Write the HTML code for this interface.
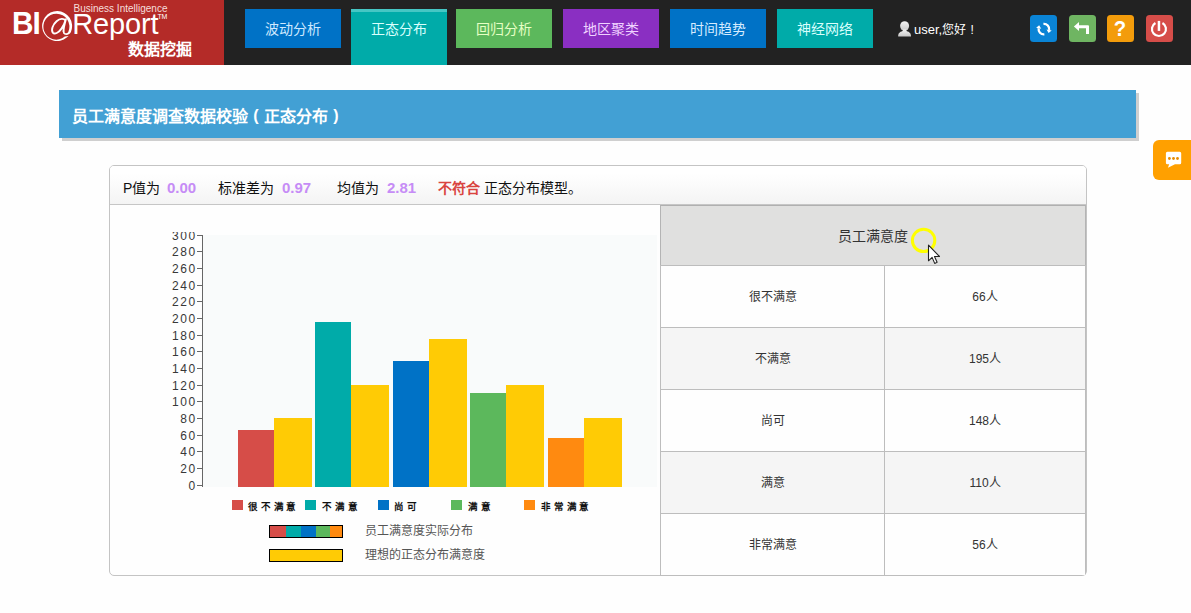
<!DOCTYPE html>
<html lang="zh-CN">
<head>
<meta charset="utf-8">
<title>BI@Report 数据挖掘</title>
<style>
*{box-sizing:border-box;margin:0;padding:0}
html,body{width:1191px;height:613px;overflow:hidden;background:#fefefe}
body{position:relative;font-family:"Liberation Sans",sans-serif;color:#222;font-size:14px}
.abs{position:absolute}
/* header */
#hdr{position:absolute;left:0;top:0;width:1191px;height:65px;background:#222222}
#logo{position:absolute;left:0;top:0;width:224px;height:65px;background:#b42b28;color:#fff;overflow:hidden}
#logo .bi{position:absolute;left:12px;top:4.500px;font-size:32px;line-height:36px;font-weight:bold;letter-spacing:-1px;transform:scaleX(.93);transform-origin:0 0}
#logo .rep{position:absolute;left:72.200px;top:8px;font-size:29px;line-height:33px;letter-spacing:-.15px}
#logo .tm{position:absolute;left:157.500px;top:12.800px;font-size:7px;line-height:8px;letter-spacing:-.3px}
#logo .sub{position:absolute;left:73.5px;top:2.800px;font-size:10px;line-height:12px;color:#f6dedc;white-space:nowrap}
#logo .cn{position:absolute;left:128px;top:38.500px;font-size:16px;line-height:22px;font-weight:bold;white-space:nowrap}
.tab{position:absolute;top:9px;width:96px;height:39px;line-height:41px;text-align:center;font-size:14px;white-space:nowrap}
.t1{left:245px;background:#0072c6;color:#cfe9ff}
.t2{left:351px;background:#00aba9;color:#d9fffd;height:56px;border-top:3px solid #45c6c4;line-height:35px}
.t3{left:456px;background:#5cb85c;color:#e6ffc4}
.t4{left:563px;background:#8a2fc2;color:#f0d2ff}
.t5{left:670px;background:#0072c6;color:#d6ecff}
.t6{left:777px;background:#00aba9;color:#d9fffd}
#user{position:absolute;left:914px;top:21px;font-size:13px;line-height:18px;color:#fff;white-space:nowrap}
.ib{position:absolute;top:15px;width:27px;height:27px;border-radius:3.500px}
/* title */
#title{position:absolute;left:59px;top:90px;width:1077px;height:48px;background:#42a0d4;box-shadow:3px 3px 0 #cfcfcf;color:#fff;font-size:16px;font-weight:bold;line-height:53px;padding-left:13px;white-space:nowrap}
#title i{display:inline-block;width:16px;text-align:center;font-style:normal;position:relative;top:-1px}
#chat{position:absolute;left:1153px;top:140px;width:40px;height:40px;background:#ffa000;border-radius:6px 0 0 6px}
/* panel */
#panel{position:absolute;left:109px;top:165px;width:978px;height:411px;border:1px solid #c4c4c4;border-radius:5px;background:#fefefe;overflow:hidden}
#phead{position:absolute;left:0;top:0;width:976px;height:39px;background:linear-gradient(#ffffff 20%,#f4f4f4);border-bottom:1px solid #c6c6c6;font-size:14px;line-height:20px;white-space:nowrap;color:#111}
#phead span{position:absolute;top:12px}
.pv{color:#c68cf6;font-weight:bold;font-size:15px}
.bad{color:#d9443f;font-weight:bold}
/* chart */
#plot{position:absolute;left:203px;top:235px;width:454px;height:252px;background:#f9fbfb}
.bar{position:absolute}
.yl{position:absolute;left:150.600px;width:46px;text-align:right;font-size:12px;line-height:12px;letter-spacing:1.500px;color:#383838;white-space:nowrap}
.tk{position:absolute;left:197px;width:6px;height:1px;background:#666}
.lg{position:absolute;top:500px;width:11px;height:10px}
.lt{position:absolute;top:499.500px;font-size:9.500px;line-height:14px;font-weight:bold;letter-spacing:2.800px;color:#111;white-space:nowrap}
.strip{position:absolute;left:269px;width:74px;height:13px;border:1px solid #000}
.st{position:absolute;left:365px;font-size:12px;line-height:16px;color:#555;white-space:nowrap}
/* table */
#tbl{position:absolute;left:660px;top:204px;width:427px;height:372px}
.cell{position:absolute;text-align:center;font-size:12px;color:#333;white-space:nowrap}
</style>
</head>
<body>
<div id="hdr">
  <div id="logo">
    <div class="sub">Business Intelligence</div>
    <div class="bi">BI</div>
    <svg class="abs" style="left:40px;top:9px" width="36" height="36" viewBox="0 0 36 36"><path fill="#fff" d="M28.600 27 L26.74 28.54 A15.0 15.0 0 1 1 31.01 22.67 C30.500 25 27.500 26.300 25 25.800 C23.300 25.400 22.600 24 22.900 22 L24.300 21.600 C24.200 23.300 25 24.300 26.400 24.200 C27.500 24.100 28 23.500 28.45 22.52 A13.0 13.0 0 1 0 24.76 27.61 Z"/><path fill="none" stroke="#fff" stroke-width="1.900" stroke-linecap="round" stroke-linejoin="round" d="M25.400 11.600 C24 9.300 20 9.200 16.600 12.200 C12.600 15.600 11 21.200 12.800 23.600 C14.600 25.800 18.600 23.800 21.500 19.600 C23.400 16.800 24.900 13.500 25.900 10.200 C24.800 14.200 23.600 18.200 23.500 22.200"/></svg>
    <div class="rep">Report</div>
    <div class="tm">TM</div>
    <div class="cn">数据挖掘</div>
  </div>
  <div class="tab t1">波动分析</div>
  <div class="tab t2">正态分布</div>
  <div class="tab t3">回归分析</div>
  <div class="tab t4">地区聚类</div>
  <div class="tab t5">时间趋势</div>
  <div class="tab t6">神经网络</div>
  <svg class="abs" style="left:898px;top:20.500px" width="14" height="16" viewBox="0 0 14 16"><defs><linearGradient id="ug" x1="0" y1="0" x2="0" y2="1"><stop offset="0" stop-color="#f4f4f4"/><stop offset="1" stop-color="#c8c8c8"/></linearGradient></defs><g fill="url(#ug)"><ellipse cx="6.600" cy="5" rx="4.500" ry="4.800"/><path d="M.2 15.500C.2 12.400 1.400 11.200 4.700 10.100L5 8.500H8.200L8.500 10.100C11.800 11.200 13 12.400 13 15.500Z"/></g></svg>
  <div id="user">user,<span style="font-size:12px">您好<span style="display:inline-block;width:12px;text-align:center">!</span></span></div>
  <div class="ib" style="left:1030px;background:#0a84d6">
    <svg width="27" height="27" viewBox="0 0 27 27"><g fill="none" stroke="#fff" stroke-width="2.3"><path d="M13.44 8.82A5.3 5.3 0 0 1 19.12 15.02"/><path d="M14.36 19.38A5.3 5.3 0 0 1 8.68 13.18"/></g><path fill="#fff" d="M18.62 17.88 L21.68 15.47 L16.56 14.57Z"/><path fill="#fff" d="M9.18 10.32 L6.12 12.73 L11.24 13.63Z"/></svg>
  </div>
  <div class="ib" style="left:1069px;background:#6fb562">
    <svg width="27" height="27" viewBox="0 0 27 27"><path fill="#fff" d="M4.900 11.500L10 7.100V10.200H19Q20 10.200 20 11.200V18.900H17V13.200H10V15.900Z"/></svg>
  </div>
  <div class="ib" style="left:1107px;background:#f39c0b;color:#fff;font-weight:bold;font-size:22.500px;line-height:27px;text-align:center"><span style="display:inline-block;transform:scaleX(.9);position:relative;left:-.6px">?</span></div>
  <div class="ib" style="left:1146px;background:#d64d49">
    <svg width="27" height="27" viewBox="0 0 27 27"><g fill="none" stroke="#fff"><path d="M9.450 7.940A7 7 0 1 0 16.450 7.940" stroke-width="2.200"/><path d="M12.950 5.900V15.900" stroke-width="2.500"/></g></svg>
  </div>
</div>

<div id="title">员工满意度调查数据校验<i>(</i>正态分布<i>)</i></div>
<div id="chat"><svg class="abs" style="left:12px;top:11px" width="18" height="18" viewBox="0 0 18 18"><path fill="#fff" d="M2.400 .8H14.700Q16.200 .8 16.200 2.300V11.700Q16.200 13.200 14.700 13.200H10L2.900 16.800L4.200 13.200H2.400Q.9 13.200 .9 11.700V2.300Q.9 .8 2.400 .8Z"/><g fill="#e88d00"><circle cx="4.400" cy="7.500" r="1.400"/><circle cx="8.500" cy="7.500" r="1.400"/><circle cx="12.500" cy="7.500" r="1.400"/></g></svg></div>

<div id="panel">
  <div id="phead">
    <span style="left:13px">P值为</span><span class="pv" style="left:57px">0.00</span>
    <span style="left:108px">标准差为</span><span class="pv" style="left:172px">0.97</span>
    <span style="left:227px">均值为</span><span class="pv" style="left:277px">2.81</span>
    <span class="bad" style="left:328px">不符合</span><span style="left:374px">正态分布模型。</span>
  </div>
</div>

<!-- chart (page coordinates) -->
<div class="abs" id="chart" style="left:110px;top:232px;width:550px;height:343px;overflow:hidden"></div>
<div id="plot"></div>
<div class="abs" style="left:202px;top:235px;width:1px;height:252px;background:#666"></div>
<div id="ticks">
<div class="tk" style="top:485px"></div><div class="yl" style="top:480px">0</div>
<div class="tk" style="top:468px"></div><div class="yl" style="top:463px">20</div>
<div class="tk" style="top:451px"></div><div class="yl" style="top:446px">40</div>
<div class="tk" style="top:435px"></div><div class="yl" style="top:430px">60</div>
<div class="tk" style="top:418px"></div><div class="yl" style="top:413px">80</div>
<div class="tk" style="top:401px"></div><div class="yl" style="top:396px">100</div>
<div class="tk" style="top:385px"></div><div class="yl" style="top:380px">120</div>
<div class="tk" style="top:368px"></div><div class="yl" style="top:363px">140</div>
<div class="tk" style="top:351px"></div><div class="yl" style="top:346px">160</div>
<div class="tk" style="top:335px"></div><div class="yl" style="top:330px">180</div>
<div class="tk" style="top:318px"></div><div class="yl" style="top:313px">200</div>
<div class="tk" style="top:301px"></div><div class="yl" style="top:296px">220</div>
<div class="tk" style="top:285px"></div><div class="yl" style="top:280px">240</div>
<div class="tk" style="top:268px"></div><div class="yl" style="top:263px">260</div>
<div class="tk" style="top:251px"></div><div class="yl" style="top:246px">280</div>
<div class="tk" style="top:235px"></div><div class="yl" style="top:230px">300</div>
<div class="abs" style="left:150px;top:222px;width:47px;height:10px;background:#fefefe"></div>
</div>

<div class="bar" style="left:238px;top:430px;width:36px;height:57px;background:#d64d48"></div>
<div class="bar" style="left:274px;top:418px;width:38px;height:69px;background:#ffcb05"></div>
<div class="bar" style="left:315px;top:322px;width:36px;height:165px;background:#00aba9"></div>
<div class="bar" style="left:351px;top:385px;width:38px;height:102px;background:#ffcb05"></div>
<div class="bar" style="left:393px;top:361px;width:36px;height:126px;background:#0072c6"></div>
<div class="bar" style="left:429px;top:339px;width:38px;height:148px;background:#ffcb05"></div>
<div class="bar" style="left:470px;top:393px;width:36px;height:94px;background:#5cb85c"></div>
<div class="bar" style="left:506px;top:385px;width:38px;height:102px;background:#ffcb05"></div>
<div class="bar" style="left:548px;top:438px;width:36px;height:49px;background:#ff8a10"></div>
<div class="bar" style="left:584px;top:418px;width:38px;height:69px;background:#ffcb05"></div>

<div class="lg" style="left:232px;background:#d64d48"></div><div class="lt" style="left:248px">很不满意</div>
<div class="lg" style="left:305px;background:#00aba9"></div><div class="lt" style="left:322px">不满意</div>
<div class="lg" style="left:378px;background:#0072c6"></div><div class="lt" style="left:394px">尚可</div>
<div class="lg" style="left:451px;background:#5cb85c"></div><div class="lt" style="left:468px">满意</div>
<div class="lg" style="left:524px;background:#ff8a10"></div><div class="lt" style="left:541px">非常满意</div>

<div class="strip" style="top:525px;background:linear-gradient(90deg,#d64d48 0 16px,#00aba9 16px 31px,#0072c6 31px 46px,#5cb85c 46px 60px,#ff8a10 60px)"></div>
<div class="st" style="top:523px">员工满意度实际分布</div>
<div class="strip" style="top:549px;background:#ffcb05"></div>
<div class="st" style="top:547px">理想的正态分布满意度</div>

<div class="abs" style="left:109px;top:165px;width:978px;height:411px;overflow:hidden;border-radius:5px"><div class="abs" style="left:-109px;top:-165px;width:1191px;height:613px">
<!-- table -->
<div class="abs" style="left:660px;top:205px;width:426px;height:61px;background:#e0e0df;border:1px solid #b4b4b4;border-top:1px solid #b0b0b0"></div>
<div class="cell" style="left:661px;top:226px;width:424px;font-size:14px;line-height:20px;color:#333">员工满意度</div>
<div id="rows">
<div class="abs" style="left:660px;top:265px;width:225px;height:63px;background:#fefefe;border:1px solid #bdbdbd"></div>
<div class="abs" style="left:884px;top:265px;width:202px;height:63px;background:#fefefe;border:1px solid #bdbdbd"></div>
<div class="cell" style="left:661px;top:288.400px;width:223px;line-height:18px">很不满意</div>
<div class="cell" style="left:885px;top:288.400px;width:200px;line-height:18px">66人</div>
<div class="abs" style="left:660px;top:327px;width:225px;height:63px;background:#f5f5f5;border:1px solid #bdbdbd"></div>
<div class="abs" style="left:884px;top:327px;width:202px;height:63px;background:#f5f5f5;border:1px solid #bdbdbd"></div>
<div class="cell" style="left:661px;top:350.400px;width:223px;line-height:18px">不满意</div>
<div class="cell" style="left:885px;top:350.400px;width:200px;line-height:18px">195人</div>
<div class="abs" style="left:660px;top:389px;width:225px;height:63px;background:#fefefe;border:1px solid #bdbdbd"></div>
<div class="abs" style="left:884px;top:389px;width:202px;height:63px;background:#fefefe;border:1px solid #bdbdbd"></div>
<div class="cell" style="left:661px;top:412.400px;width:223px;line-height:18px">尚可</div>
<div class="cell" style="left:885px;top:412.400px;width:200px;line-height:18px">148人</div>
<div class="abs" style="left:660px;top:451px;width:225px;height:63px;background:#f5f5f5;border:1px solid #bdbdbd"></div>
<div class="abs" style="left:884px;top:451px;width:202px;height:63px;background:#f5f5f5;border:1px solid #bdbdbd"></div>
<div class="cell" style="left:661px;top:474.400px;width:223px;line-height:18px">满意</div>
<div class="cell" style="left:885px;top:474.400px;width:200px;line-height:18px">110人</div>
<div class="abs" style="left:660px;top:513px;width:225px;height:63px;background:#fefefe;border:1px solid #bdbdbd"></div>
<div class="abs" style="left:884px;top:513px;width:202px;height:63px;background:#fefefe;border:1px solid #bdbdbd"></div>
<div class="cell" style="left:661px;top:536.400px;width:223px;line-height:18px">非常满意</div>
<div class="cell" style="left:885px;top:536.400px;width:200px;line-height:18px">56人</div>
</div>

</div></div>
<!-- cursor -->
<svg class="abs" style="left:905px;top:222px" width="42" height="48" viewBox="0 0 42 48"><circle cx="18.600" cy="18.400" r="11.200" fill="none" stroke="#ffff00" stroke-width="3"/><path d="M23.500 23.200v15.600l3.600-3.400 2.600 6 2.400-1.100-2.600-5.800h5z" fill="#fff" stroke="#222" stroke-width="1.100" stroke-linejoin="round"/></svg>
</body>
</html>
